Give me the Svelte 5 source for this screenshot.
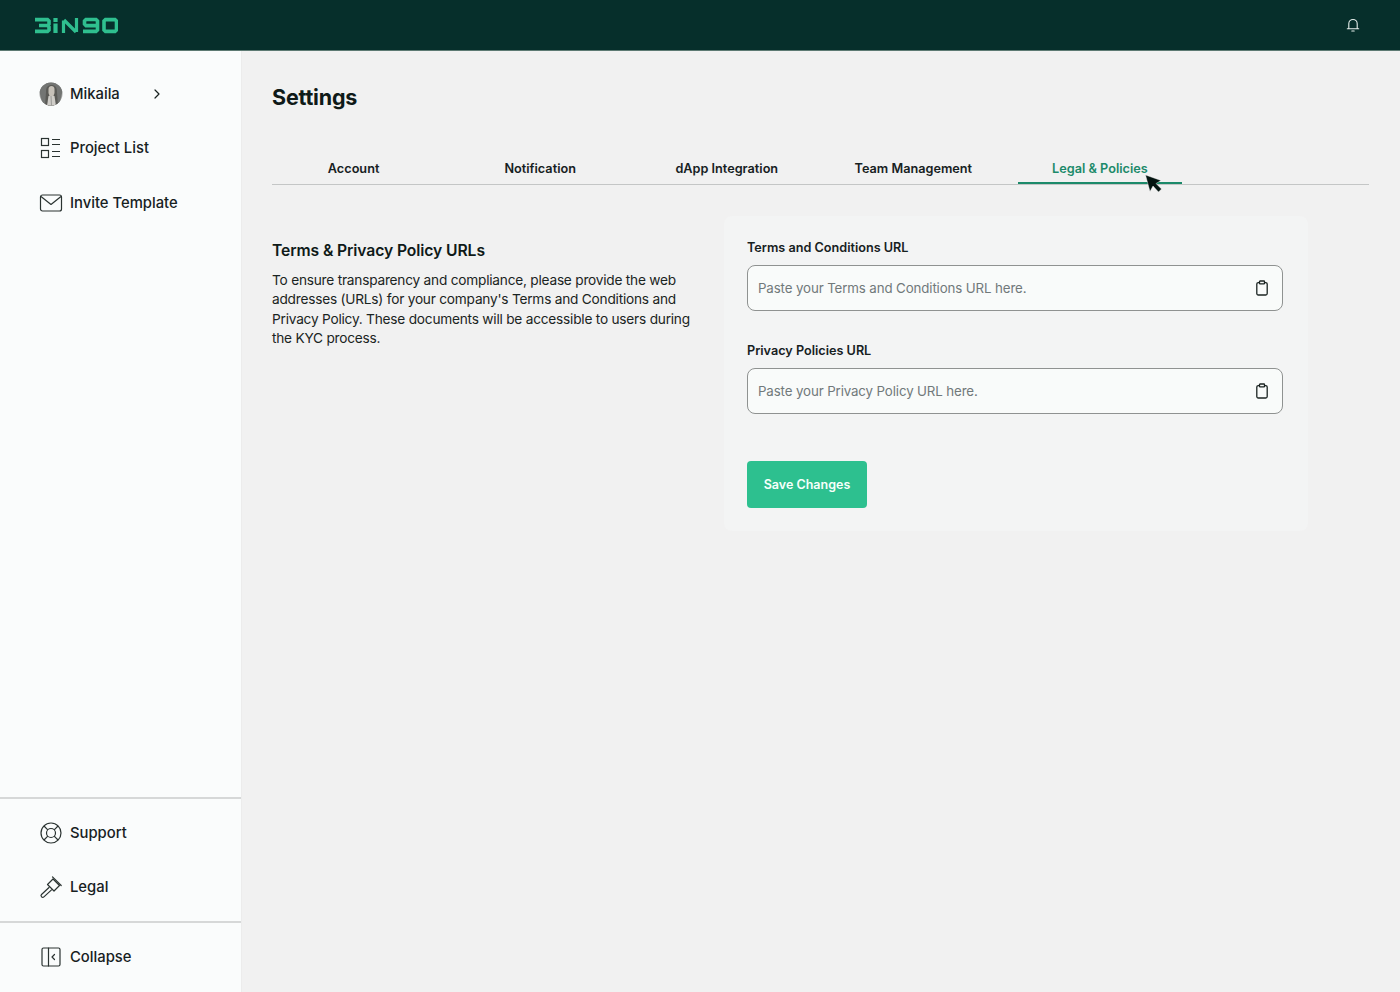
<script>
  const tabs = ['Account', 'Notification', 'dApp Integration', 'Team Management', 'Legal & Policies'];
  const active = 'Legal & Policies';
  const fields = [
    { label: 'Terms and Conditions URL', placeholder: 'Paste your Terms and Conditions URL here.' },
    { label: 'Privacy Policies URL', placeholder: 'Paste your Privacy Policy URL here.' }
  ];
</script>

<div class="page">
  <header class="topbar">
    <svg class="logo" width="84" height="17" viewBox="0 0 84 17" role="img" aria-label="Bingo logo" fill="none" stroke="#2fbf8f" stroke-width="3.600">
      <path d="M1 2.600h12.500l1.500 1.500v2.900l-1.500 1.500H5M13.500 8.500l1.500 1.500v3l-1.500 1.400H1" />
      <path d="M21.500 1v4M21.500 6.500V16" stroke-width="4.200" />
      <path d="M29.500 16V3.500M30 3l12 12M42.500 1v14" stroke-width="3.200" />
      <path d="M63.500 8.600H52l-1.500-1.500V4l1.500-1.500h10l1.500 1.500v9l-1.500 1.400H49" />
      <path d="M71.500 2.600h9.500l1.500 1.500v8.800L81 14.400h-9.500L70 12.900V4.100z" />
    </svg>
    <svg class="bell" width="16" height="16" viewBox="0 0 16 16" fill="none" stroke="#e6efec" stroke-width="1.100" stroke-linecap="round" stroke-linejoin="round">
      <path d="M3.800 11.600V6.700a4.200 4.200 0 0 1 8.400 0v4.900M2.300 11.800h11.400" />
      <path d="M6.800 14h2.400" />
    </svg>
  </header>

  <div class="body">
    <aside class="sidebar">
      <nav class="group top">
        <div class="item">
          <svg class="icon" width="24" height="24" viewBox="0 0 24 24">
            <defs><clipPath id="av"><circle cx="12" cy="12" r="11.500" /></clipPath></defs>
            <g clip-path="url(#av)">
              <rect width="24" height="24" fill="#a4a6a4" />
              <path d="M0 0h24v7l-4 17H4L0 8z" fill="#737573" />
              <path d="M6 24l1-14c0-5 2-7 5.500-7S18 5 18 10l1 14z" fill="#5a5a56" />
              <path d="M9.500 7c0-2 1.500-3 3-3s3 1 3 3v4l-1 3h-4l-1-3z" fill="#c6c1b8" />
              <path d="M8 24l1.500-10h6L17 24z" fill="#cfcdc8" />
              <path d="M12 14l.5 10" stroke="#9a9a96" stroke-width="1" />
            </g>
          </svg>
          <span class="name">Mikaila</span>
          <svg class="chev" width="10" height="10" viewBox="0 0 10 10" fill="none" stroke="#17211f" stroke-width="1.200" stroke-linecap="round" stroke-linejoin="round"><path d="M3 1l4 4-4 4" /></svg>
        </div>
        <div class="item">
          <svg class="icon" width="24" height="24" viewBox="0 0 24 24" fill="none" stroke="#2a3331" stroke-width="1.200">
            <rect x="2.500" y="2.500" width="7" height="7" /><rect x="2.500" y="14.500" width="7" height="7" />
            <path d="M13 3.500h8M13 8.500h8M13 15.500h8M13 20.500h8" />
          </svg>
          <span>Project List</span>
        </div>
        <div class="item">
          <svg class="icon" width="24" height="24" viewBox="0 0 24 24" fill="none" stroke="#2a3331" stroke-width="1.200" stroke-linejoin="round">
            <rect x="1.500" y="4" width="21" height="16" rx="2" />
            <path d="M2 5.500l10 8 10-8" />
          </svg>
          <span>Invite Template</span>
        </div>
      </nav>

      <nav class="group support">
        <div class="item">
          <svg class="icon" width="24" height="24" viewBox="0 0 24 24" fill="none" stroke="#2a3331" stroke-width="1.200">
            <circle cx="12" cy="12" r="10" /><circle cx="12" cy="12" r="4.500" />
            <path d="M5 5l3.800 3.800M19 5l-3.800 3.800M5 19l3.800-3.800M19 19l-3.800-3.800" />
          </svg>
          <span>Support</span>
        </div>
        <div class="item">
          <svg class="icon" width="24" height="24" viewBox="0 0 24 24" fill="none" stroke="#2a3331" stroke-width="1.200" stroke-linejoin="round" stroke-linecap="round">
            <path d="M8.500 9.500l5.500-5.500 6.500 6.500-5.500 5.500z" />
            <path d="M13.500 1.800l8.700 8.700" />
            <path d="M10 12.500l-7.500 7a1.700 1.700 0 0 0 2.400 2.400l7.600-7" />
          </svg>
          <span>Legal</span>
        </div>
      </nav>

      <nav class="group collapse">
        <div class="item">
          <svg class="icon" width="24" height="24" viewBox="0 0 24 24" fill="none" stroke="#2a3331" stroke-width="1.200" stroke-linecap="round" stroke-linejoin="round">
            <rect x="3" y="3" width="18" height="18" rx="1.500" />
            <path d="M9.500 3v18M15.500 9.500L13 12l2.500 2.500" />
          </svg>
          <span>Collapse</span>
        </div>
      </nav>
    </aside>

    <main class="main">
      <h1>Settings</h1>

      <div class="tabs">
        {#each tabs as tab}
          <div class="tab" class:active={tab === active}>{tab}</div>
        {/each}
      </div>

      <section class="content">
        <div class="intro">
          <h2>Terms &amp; Privacy Policy URLs</h2>
          <p>To ensure transparency and compliance, please provide the web addresses (URLs) for your company's Terms and Conditions and Privacy Policy. These documents will be accessible to users during the KYC process.</p>
        </div>

        <div class="card">
          {#each fields as field}
            <div class="field">
              <div class="label">{field.label}</div>
              <div class="input">
                <span>{field.placeholder}</span>
                <svg width="16" height="16" viewBox="0 0 16 16" fill="none" stroke="#1b2422" stroke-width="1.300" stroke-linejoin="round">
                  <rect x="2.800" y="2.600" width="10.400" height="12.400" rx="1.500" />
                  <rect x="5.500" y="1" width="5" height="2.800" rx=".6" fill="#f9fbfa" />
                </svg>
              </div>
            </div>
          {/each}
          <button class="save" type="button">Save Changes</button>
        </div>
      </section>

      <svg class="cursor" width="18" height="18" viewBox="0 0 18 18">
        <path d="M.5 0L5 16.500 8 11l5.500 6 3-3L11 8.500l5-3z" fill="#03130f" stroke="#fff" stroke-width=".4" stroke-linejoin="round" />
      </svg>
    </main>
  </div>
</div>

<style>
  :global(body) {
    margin: 0;
    background: #f1f1f1;
    font-family: "Inter", "Noto Sans", sans-serif;
    color: #0f1a18;
  }
  .page {
    height: 992px;
    display: flex;
    flex-direction: column;
    overflow: hidden;
  }
  .topbar {
    flex: none;
    height: 50px;
    border-bottom: 1px solid #5d7a73;
    background: #062f2b;
    display: flex;
    align-items: center;
    justify-content: space-between;
    padding: 0 39px 0 34px;
  }
  .logo { display: block; }
  .bell { display: block; }
  .body {
    flex: 1;
    display: flex;
    min-height: 0;
  }
  .sidebar {
    flex: none;
    width: 242px;
    border-right: 1px solid #ececec;
    box-sizing: border-box;
    background: #fafcfc;
    display: flex;
    flex-direction: column;
  }
  .group { display: flex; flex-direction: column; }
  .top { flex: 1; padding-top: 15.400px; }
  .support {
    border-top: 2px solid #d6d8d8;
    padding: 7px 0 6px;
  }
  .collapse {
    border-top: 2px solid #d6d8d8;
    padding: 7px 0 8px;
  }
  .item {
    height: 54.500px;
    display: flex;
    align-items: center;
    gap: 7px;
    padding-left: 39px;
    font-size: 14.800px;
    font-weight: 500;
    color: #17211f;
  }
  .icon { flex: none; }
  .name { width: 71px; }
  .chev { display: block; margin-left: 4px; }

  .main {
    flex: 1;
    position: relative;
    padding: 0 31px 0 30px;
    min-width: 0;
  }
  h1 {
    margin: 32px 0 0;
    font-size: 21.500px;
    line-height: 28px;
    font-weight: 700;
    letter-spacing: -0.2px;
  }
  .tabs {
    margin-top: 46px;
    height: 27px;
    display: flex;
    gap: 23.400px;
    border-bottom: 1px solid #c4c6c6;
  }
  .tab {
    width: 163.200px;
    box-sizing: border-box;
    height: 27px;
    padding-top: 3px;
    text-align: center;
    font-size: 12.700px;
    line-height: 18px;
    font-weight: 600;
    color: #17211f;
  }
  .tab.active {
    color: #1c8a6a;
    border-bottom: 2px solid #1c8a6a;
  }
  .content {
    display: flex;
    align-items: flex-start;
    margin-top: 31px;
  }
  .intro {
    width: 452px;
    padding-top: 24px;
  }
  h2 {
    margin: 0 0 9px;
    font-size: 15.700px;
    line-height: 22px;
    font-weight: 600;
    letter-spacing: -0.1px;
  }
  p {
    margin: 0;
    width: 420px;
    font-size: 13.700px;
    line-height: 19.400px;
    font-weight: 400;
    letter-spacing: -0.23px;
    color: #1a2422;
  }
  .card {
    width: 584px;
    height: 315px;
    box-sizing: border-box;
    background: #f3f4f4;
    border-radius: 8px;
    padding: 23px 25px 0 23px;
  }
  .field { margin-bottom: 31px; }
  .label {
    font-size: 12.650px;
    line-height: 18px;
    font-weight: 600;
    margin-bottom: 8px;
    color: #17211f;
  }
  .input {
    height: 46px;
    box-sizing: border-box;
    border: 1px solid #8f9291;
    border-radius: 8px;
    background: #f9fbfa;
    display: flex;
    align-items: center;
    justify-content: space-between;
    padding: 0 12px 0 10px;
    font-size: 13.300px;
    letter-spacing: -0.12px;
    color: #71797a;
  }
  .input svg { display: block; }
  .save {
    display: block;
    margin-top: 47px;
    width: 120px;
    height: 47px;
    border: 0;
    border-radius: 4px;
    background: #2dc08f;
    color: #f6fffb;
    font-family: inherit;
    font-size: 12.500px;
    font-weight: 600;
    padding: 0;
  }
  .cursor {
    position: absolute;
    left: 903px;
    top: 124px;
  }
</style>
